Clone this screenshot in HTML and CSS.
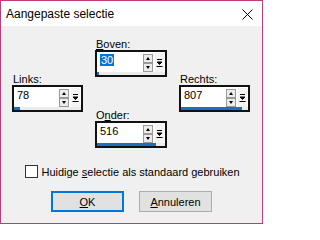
FILE: index.html
```html
<!DOCTYPE html>
<html lang="nl">
<head>
<meta charset="utf-8">
<title>Aangepaste selectie</title>
<link rel="stylesheet" href="styles.css">
</head>
<body>
<div class="win">
  <div class="titlebar">
    <span class="title">Aangepaste selectie</span>
    <svg class="close" width="11" height="11" viewBox="0 0 11 11"><path d="M0.5 0.5 L10.5 10.5 M10.5 0.5 L0.5 10.5" stroke="#000" stroke-width="1" fill="none"/></svg>
  </div>
  <div class="content">
    <div class="fields">
      <div class="col side">
        <div class="lbl">Links:</div>
        <div class="spinbox">
          <div class="row">
            <span class="val">78</span>
            <div class="arrows"><span class="ab up"></span><span class="ab down"></span></div>
            <div class="drop"><svg width="7" height="11" viewBox="0 0 7 11"><path d="M1 2.5 H6 M1 5 H6 L3.5 7.5 Z M0.5 9.5 H6.5" stroke="#000" stroke-width="1" fill="#000"/></svg></div>
          </div>
          <div class="bar"><div class="fill" style="width:6px"></div></div>
        </div>
      </div>
      <div class="col center">
        <div class="lbl"><u>B</u>oven:</div>
        <div class="spinbox">
          <div class="row">
            <span class="val"><span class="sel">30</span></span>
            <div class="arrows"><span class="ab up"></span><span class="ab down"></span></div>
            <div class="drop"><svg width="7" height="11" viewBox="0 0 7 11"><path d="M1 2.5 H6 M1 5 H6 L3.5 7.5 Z M0.5 9.5 H6.5" stroke="#000" stroke-width="1" fill="#000"/></svg></div>
          </div>
          <div class="bar"><div class="fill" style="width:2px"></div></div>
        </div>
        <div class="lbl lower">O<u>n</u>der:</div>
        <div class="spinbox">
          <div class="row">
            <span class="val">516</span>
            <div class="arrows"><span class="ab up"></span><span class="ab down"></span></div>
            <div class="drop"><svg width="7" height="11" viewBox="0 0 7 11"><path d="M1 2.5 H6 M1 5 H6 L3.5 7.5 Z M0.5 9.5 H6.5" stroke="#000" stroke-width="1" fill="#000"/></svg></div>
          </div>
          <div class="bar"><div class="fill" style="width:59px"></div></div>
        </div>
      </div>
      <div class="col side">
        <div class="lbl">Rechts:</div>
        <div class="spinbox">
          <div class="row">
            <span class="val">807</span>
            <div class="arrows"><span class="ab up"></span><span class="ab down"></span></div>
            <div class="drop"><svg width="7" height="11" viewBox="0 0 7 11"><path d="M1 2.5 H6 M1 5 H6 L3.5 7.5 Z M0.5 9.5 H6.5" stroke="#000" stroke-width="1" fill="#000"/></svg></div>
          </div>
          <div class="bar"><div class="fill" style="width:61px"></div></div>
        </div>
      </div>
    </div>
    <label class="check"><span class="cb"></span><span>Huidige <u>s</u>electie als standaard gebruiken</span></label>
    <div class="buttons">
      <span class="btn default"><u>O</u>K</span>
      <span class="btn"><u>A</u>nnuleren</span>
    </div>
  </div>
</div>
</body>
</html>
```

FILE: styles.css
```css
html, body {
  margin: 0;
  padding: 0;
}
body {
  font-family: "Liberation Sans", Arial, sans-serif;
  font-size: 11px;
  color: #000;
}
.win {
  width: 263px;
  height: 224px;
  box-sizing: border-box;
  border: 1px solid #c23a74;
  background: #f0f0f0;
  display: flex;
  flex-direction: column;
}
.titlebar {
  height: 25px;
  flex: none;
  background: #fff;
  display: flex;
  align-items: center;
  justify-content: space-between;
  padding: 0 9px 0 5px;
}
.title {
  font-size: 12px;
  padding-top: 1px;
}
.close {
  display: block;
  margin-top: 2px;
}
.content {
  flex: 1;
  display: flex;
  flex-direction: column;
  align-items: center;
}
.fields {
  display: flex;
  align-self: stretch;
  padding-left: 11px;
  gap: 12px;
}
.col {
  display: flex;
  flex-direction: column;
}
.side {
  padding-top: 47px;
  width: 71px;
}
.center {
  padding-top: 12px;
  width: 72px;
}
.lbl {
  height: 12px;
  line-height: 12px;
  padding-left: 1px;
}
.lbl.lower {
  margin-top: 32px;
}
.spinbox {
  height: 27px;
  box-sizing: border-box;
  border: 2px solid #111;
  background: #fff;
  display: flex;
  flex-direction: column;
}
.row {
  flex: 1;
  display: flex;
  align-items: flex-start;
}
.val {
  flex: 1;
  padding: 2px 0 0 3px;
  line-height: 12px;
}
.sel {
  background: #0078d7;
  color: #fff;
  padding: 0 1px;
}
.arrows {
  display: flex;
  flex-direction: column;
  margin-top: 2px;
  margin-right: 2px;
}
.ab {
  width: 10px;
  height: 9px;
  box-sizing: border-box;
  border: 1px solid #9a9a9a;
  background: #ececec;
  position: relative;
}
.ab::after {
  content: "";
  position: absolute;
  left: 2px;
  width: 0;
  height: 0;
  border-left: 2.5px solid transparent;
  border-right: 2.5px solid transparent;
}
.up::after {
  top: 2px;
  border-bottom: 3px solid #000;
}
.down::after {
  top: 2px;
  border-top: 3px solid #000;
}
.drop {
  width: 9px;
  height: 19px;
  margin-right: 1px;
  margin-top: 1px;
  background: #f4f4f4;
  display: flex;
  align-items: center;
  justify-content: center;
}
.drop svg {
  display: block;
}
.bar {
  height: 3px;
  background: #ececec;
  display: flex;
}
.fill {
  background: #1c6fc2;
  height: 3px;
}
.check {
  display: flex;
  align-items: center;
  gap: 3px;
  margin-top: 17px;
  height: 13px;
  margin-left: 2px;
}
.cb {
  width: 13px;
  height: 13px;
  box-sizing: border-box;
  border: 1px solid #333;
  background: #fff;
}
.buttons {
  display: flex;
  gap: 15px;
  margin-top: 13px;
}
.btn {
  width: 73px;
  height: 21px;
  box-sizing: border-box;
  border: 1px solid #adadad;
  background: #e1e1e1;
  display: flex;
  align-items: center;
  justify-content: center;
}
.btn.default {
  border: 2px solid #0078d7;
}
```
